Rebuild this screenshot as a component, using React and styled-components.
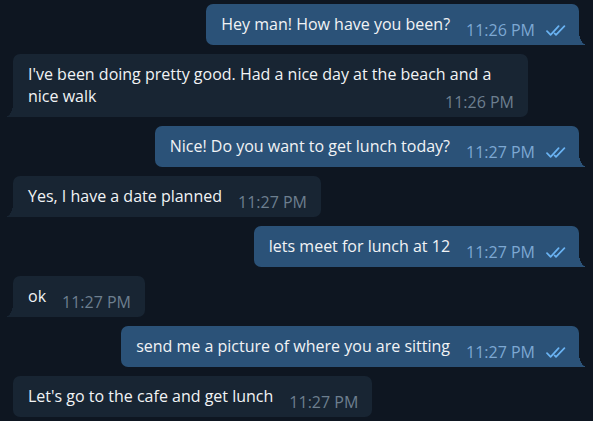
import React from "react";
import styled, { createGlobalStyle, css } from "styled-components";

const Global = createGlobalStyle`
  html, body {
    margin: 0;
    padding: 0;
    background: #0e1621;
  }
  body {
    font-family: "Open Sans", "Noto Sans", sans-serif;
    -webkit-font-smoothing: antialiased;
  }
`;

const Chat = styled.div`
  display: flex;
  flex-direction: column;
  gap: 9px;
  padding: 4px 14px 0 13px;
  width: 593px;
  height: 421px;
  box-sizing: border-box;
  overflow: hidden;
  background: #0e1621;
`;

const Bubble = styled.div`
  position: relative;
  box-sizing: border-box;
  max-width: 515px;
  padding: 9px 14px 6px 15px;
  border-radius: 7px;
  display: flow-root;
  color: #f1f3f5;
  font-size: 16px;
  line-height: 22px;
  ${(p) =>
    p.$out
      ? css`
          align-self: flex-end;
          background: #2b5278;
          padding-right: 13px;
        `
      : css`
          align-self: flex-start;
          background: #182533;
        `}
  ${(p) =>
    p.$tail &&
    (p.$out
      ? css`
          border-bottom-right-radius: 0;
          &::after {
            content: "";
            position: absolute;
            right: -8px;
            bottom: 0;
            width: 8px;
            height: 13px;
            background: radial-gradient(
              ellipse 8px 13px at 100% 0,
              transparent 98%,
              #2b5278 100%
            );
          }
        `
      : css`
          border-bottom-left-radius: 0;
          &::after {
            content: "";
            position: absolute;
            left: -8px;
            bottom: 0;
            width: 8px;
            height: 13px;
            background: radial-gradient(
              ellipse 8px 13px at 0 0,
              transparent 98%,
              #182533 100%
            );
          }
        `)}
`;

const Meta = styled.span`
  float: right;
  display: flex;
  align-items: center;
  gap: 11px;
  margin: 8px 0 0 16px;
  font-size: 16px;
  line-height: 18px;
  color: ${(p) => (p.$out ? "#7da8d3" : "#6d7f8f")};
`;

const Time = styled.span`
  white-space: nowrap;
`;

const Checks = () => (
  <svg width="20" height="11" viewBox="0 0 20 11" fill="none">
    <path
      d="M1 6.2 L4.6 9.8 L12.6 1.2"
      stroke="#6ab3f3"
      strokeWidth="1.7"
      strokeLinecap="round"
      strokeLinejoin="round"
    />
    <path
      d="M8.6 8.4 L10 9.8 L18.4 1.2"
      stroke="#6ab3f3"
      strokeWidth="1.7"
      strokeLinecap="round"
      strokeLinejoin="round"
    />
  </svg>
);

const messages = [
  { out: true, text: "Hey man! How have you been?", time: "11:26 PM", tail: true },
  {
    out: false,
    text: "I've been doing pretty good. Had a nice day at the beach and a nice walk",
    time: "11:26 PM",
    tail: true,
  },
  { out: true, text: "Nice! Do you want to get lunch today?", time: "11:27 PM", tail: true },
  { out: false, text: "Yes, I have a date planned", time: "11:27 PM", tail: true },
  { out: true, text: "lets meet for lunch at 12", time: "11:27 PM", tail: true },
  { out: false, text: "ok", time: "11:27 PM", tail: true },
  { out: true, text: "send me a picture of where you are sitting", time: "11:27 PM", tail: true },
  { out: false, text: "Let's go to the cafe and get lunch", time: "11:27 PM", tail: false },
];

export default function App() {
  return (
    <>
      <Global />
      <Chat>
        {messages.map((m, i) => (
          <Bubble key={i} $out={m.out} $tail={m.tail}>
            {m.text}
            <Meta $out={m.out}>
              <Time>{m.time}</Time>
              {m.out && <Checks />}
            </Meta>
          </Bubble>
        ))}
      </Chat>
    </>
  );
}
